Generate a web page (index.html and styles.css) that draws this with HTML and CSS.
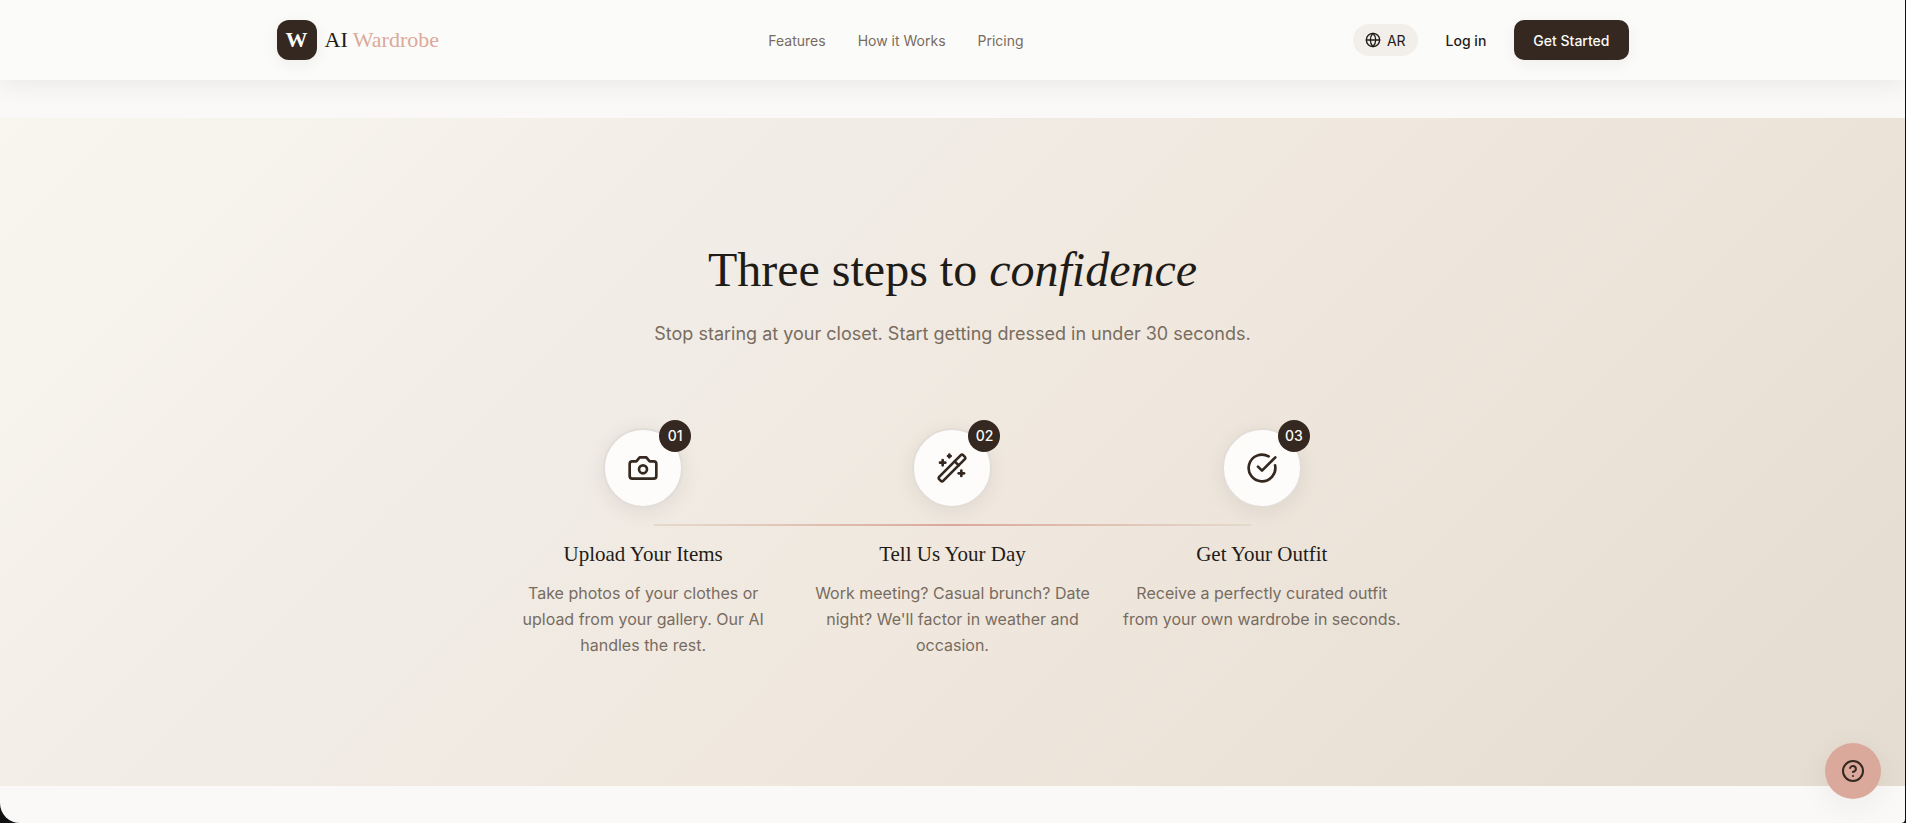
FILE: index.html
```html
<!DOCTYPE html>
<html lang="en">

<head>
    <meta charset="UTF-8">
    <meta name="viewport" content="width=device-width, initial-scale=1.0">
    <title>AI Wardrobe</title>
    <link rel="stylesheet" href="styles.css">
</head>

<body>
    <div class="page">
        <!-- header -->
        <header class="header">
            <div class="header-inner">
                <a class="logo" href="#">
                    <span class="logo-mark">W</span>
                    <span class="logo-text">AI <span class="logo-accent">Wardrobe</span></span>
                </a>
                <nav class="nav">
                    <a href="#features">Features</a>
                    <a href="#how-it-works">How it Works</a>
                    <a href="#pricing">Pricing</a>
                </nav>
                <div class="actions">
                    <button class="lang-btn" type="button">
                        <svg class="icon-sm" viewBox="0 0 24 24">
                            <circle cx="12" cy="12" r="10" />
                            <path d="M12 2a14.5 14.5 0 0 0 0 20 14.5 14.5 0 0 0 0-20" />
                            <path d="M2 12h20" />
                        </svg>
                        AR
                    </button>
                    <a class="login" href="#login">Log in</a>
                    <button class="start-btn" type="button">Get Started</button>
                </div>
            </div>
        </header>

        <main>
            <!-- how it works -->
            <section class="steps-section" id="how-it-works">
                <h2 class="title">Three steps to <em>confidence</em></h2>
                <p class="subtitle">Stop staring at your closet. Start getting dressed in under 30 seconds.</p>

                <div class="steps">
                    <div class="step">
                        <div class="step-icon">
                            <svg viewBox="0 0 24 24">
                                <path d="M14.5 4h-5L7 7H4a2 2 0 0 0-2 2v9a2 2 0 0 0 2 2h16a2 2 0 0 0 2-2V9a2 2 0 0 0-2-2h-3l-2.5-3z" />
                                <circle cx="12" cy="13" r="3" />
                            </svg>
                            <span class="step-number">01</span>
                        </div>
                        <h3 class="step-title">Upload Your Items</h3>
                        <p class="step-text">Take photos of your clothes or upload from your gallery. Our AI handles the rest.</p>
                    </div>
                    <div class="step">
                        <div class="step-icon">
                            <svg viewBox="0 0 24 24">
                                <path d="m21.64 3.64-1.28-1.28a1.21 1.21 0 0 0-1.72 0L2.36 18.64a1.21 1.21 0 0 0 0 1.72l1.28 1.28a1.2 1.2 0 0 0 1.72 0L21.64 5.36a1.2 1.2 0 0 0 0-1.72" />
                                <path d="m14 7 3 3" />
                                <path d="M5 6v4" />
                                <path d="M19 14v4" />
                                <path d="M10 2v2" />
                                <path d="M7 8H3" />
                                <path d="M21 16h-4" />
                                <path d="M11 3H9" />
                            </svg>
                            <span class="step-number">02</span>
                        </div>
                        <h3 class="step-title">Tell Us Your Day</h3>
                        <p class="step-text">Work meeting? Casual brunch? Date night? We'll factor in weather and occasion.</p>
                    </div>
                    <div class="step">
                        <div class="step-icon">
                            <svg viewBox="0 0 24 24">
                                <path d="M21.8 10A10 10 0 1 1 17 3.335" />
                                <path d="m9 11 3 3L22 4" />
                            </svg>
                            <span class="step-number">03</span>
                        </div>
                        <h3 class="step-title">Get Your Outfit</h3>
                        <p class="step-text">Receive a perfectly curated outfit from your own wardrobe in seconds.</p>
                    </div>
                </div>
            </section>
        </main>

        <!-- help -->
        <button class="help-btn" type="button" aria-label="Help">
            <svg viewBox="0 0 24 24">
                <circle cx="12" cy="12" r="10" />
                <path d="M9.09 9a3 3 0 0 1 5.83 1c0 2-3 3-3 3" />
                <path d="M12 17h.01" />
            </svg>
        </button>
    </div>
</body>

</html>
```
FILE: styles.css
```css
* {
    margin: 0;
    padding: 0;
    box-sizing: border-box;
}

html {
    background-color: #111;
}

body {
    font-family: Inter, "Liberation Sans", Arial, sans-serif;
    color: #1f1c18;
}

a {
    color: inherit;
    text-decoration: none;
}

button {
    font-family: inherit;
    border: none;
    cursor: pointer;
}

svg {
    fill: none;
    stroke: currentColor;
    stroke-width: 2;
    stroke-linecap: round;
    stroke-linejoin: round;
}

.page {
    min-height: 100vh;
    margin-right: 1px;
    background-color: #faf9f8;
    border-radius: 0 0 4px 20px;
}

/* header */
.header {
    position: sticky;
    top: 0;
    z-index: 10;
    background-color: #fbfbf9;
    box-shadow: 0 4px 24px rgba(50, 40, 32, 0.08);
}

.header-inner {
    max-width: 1400px;
    height: 80px;
    margin: 0 auto;
    padding: 0 24px;
    display: flex;
    justify-content: space-between;
    align-items: center;
}

.logo {
    display: flex;
    align-items: center;
    gap: 8px;
    font-family: Georgia, "Liberation Serif", serif;
    font-size: 22px;
}

.logo-mark {
    width: 40px;
    height: 40px;
    display: flex;
    justify-content: center;
    align-items: center;
    color: #fbfbf9;
    font-weight: bold;
    background-color: #342820;
    border-radius: 12px;
    box-shadow: 0 4px 16px rgba(50, 40, 32, 0.06);
}

.logo-accent {
    color: #dba99b;
}

.nav {
    display: flex;
    gap: 32px;
    color: #786c60;
    font-size: 14px;
}

.actions {
    display: flex;
    align-items: center;
    gap: 28px;
    font-size: 14px;
    font-weight: 500;
}

.lang-btn {
    height: 32px;
    padding: 0 12px;
    display: flex;
    align-items: center;
    gap: 6px;
    color: #1f1c18;
    font-size: 14px;
    background-color: #f2eeea;
    border-radius: 16px;
}

.icon-sm {
    width: 16px;
    height: 16px;
}

.start-btn {
    height: 40px;
    padding: 0 19px;
    color: #fbfbf9;
    font-size: 14px;
    font-weight: 500;
    background-color: #342820;
    border-radius: 10px;
    box-shadow: 0 4px 16px rgba(50, 40, 32, 0.06);
}

/* how it works */
.steps-section {
    margin-top: 38px;
    padding: 128px 24px;
    text-align: center;
    background: linear-gradient(135deg, #f9f6f0 0%, #f0ebe4 38%, #f0e8de 54%, #e4dcd0 100%);
}

.title {
    font-family: Georgia, "Liberation Serif", serif;
    font-size: 48px;
    font-weight: normal;
    line-height: 48px;
}

.subtitle {
    margin-top: 26px;
    color: #786c60;
    font-size: 18px;
    line-height: 28px;
}

.steps {
    max-width: 904px;
    margin: 80px auto 0;
    display: grid;
    grid-template-columns: repeat(3, 1fr);
    gap: 24px;
    position: relative;
}

/* line that joins the steps */
.steps::before {
    content: "";
    height: 2px;
    background: linear-gradient(90deg, #e5dacd, #dba99b, #e5dacd);
    position: absolute;
    top: 96px;
    left: 17%;
    right: 17%;
}

.step-icon {
    width: 80px;
    height: 80px;
    margin: 0 auto 32px;
    display: flex;
    justify-content: center;
    align-items: center;
    color: #342820;
    background-color: #fdfcfb;
    border: 2px solid #e2ddd7;
    border-radius: 50%;
    box-shadow: 0 4px 20px rgba(50, 40, 32, 0.08);
    position: relative;
}

.step-icon svg {
    width: 32px;
    height: 32px;
}

.step-number {
    width: 32px;
    height: 32px;
    color: #fbfbf9;
    font-size: 14px;
    font-weight: 500;
    line-height: 32px;
    background-color: #342820;
    border-radius: 50%;
    position: absolute;
    top: -10px;
    right: -10px;
}

.step-title {
    margin-bottom: 12px;
    font-family: Georgia, "Liberation Serif", serif;
    font-size: 21px;
    font-weight: normal;
    line-height: 28px;
}

.step-text {
    color: #786c60;
    font-size: 16px;
    line-height: 26px;
}

/* help */
.help-btn {
    width: 56px;
    height: 56px;
    display: flex;
    justify-content: center;
    align-items: center;
    color: #342820;
    background-color: #dba99b;
    border-radius: 50%;
    box-shadow: 0 8px 32px rgba(50, 40, 32, 0.06);
    position: fixed;
    right: 25px;
    bottom: 24px;
}

.help-btn svg {
    width: 24px;
    height: 24px;
}
```
